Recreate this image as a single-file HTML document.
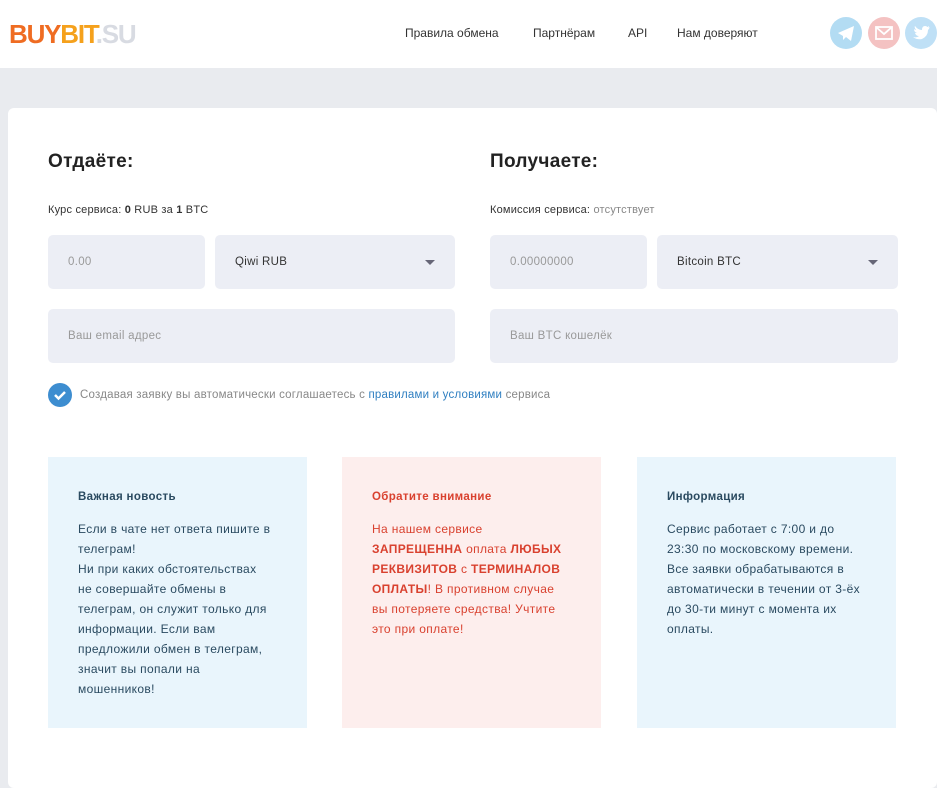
<!DOCTYPE html><html><head><meta charset="utf-8"><style>
*{box-sizing:border-box;margin:0;padding:0}
body{width:937px;height:773px;overflow:hidden;background:#e9ebef;font-family:"Liberation Sans",sans-serif;color:#333}
.hdr{height:68px;background:#fff;position:relative}
.logo{position:absolute;left:9px;top:19px;font-size:26px;font-weight:bold;letter-spacing:-1.2px}
.nav{position:absolute;top:26px;font-size:12px;color:#333}
.ic{position:absolute;top:17px;width:32px;height:32px;border-radius:50%}
.card{position:absolute;left:8px;top:108px;width:929px;height:680px;background:#fff;border-radius:6px}
.a{position:absolute}
h2{position:absolute;font-size:19px;font-weight:bold;color:#222;letter-spacing:0.3px}
.sm{position:absolute;font-size:11px;color:#333;letter-spacing:0.2px}
.inp{position:absolute;background:#eceef5;border-radius:5px;height:54px;font-size:11.5px;color:#999;padding:21px 20px;letter-spacing:0.3px}
.sel{color:#333}
.sel:after{content:"";position:absolute;right:20px;top:25px;border:5px solid transparent;border-top:5px solid #667;border-bottom:0}
.box{position:absolute;top:349px;width:259px;height:271px;padding:30px 34px 30px 30px;font-size:12px;line-height:20px;letter-spacing:0.35px}
.box b.t{display:block;font-size:11.5px;margin-bottom:12px}
</style></head><body>
<div class="hdr">
<div class="logo"><span style="color:#ef6c22">BUY</span><span style="color:#f5a11c">BIT</span><span style="color:#d8dbe2">.SU</span></div>
<div class="nav" style="left:405px">Правила обмена</div>
<div class="nav" style="left:533px">Партнёрам</div>
<div class="nav" style="left:628px">API</div>
<div class="nav" style="left:677px">Нам доверяют</div>
<div class="ic" style="left:830px;background:#b3dcf3"><svg width="32" height="32"><path d="M8 16 L24 9 L21 24 L16 20 L13 23 L13 19 Z" fill="#fff"/></svg></div>
<div class="ic" style="left:868px;background:#f4c2c2"><svg width="32" height="32"><rect x="8" y="10" width="16" height="12" fill="none" stroke="#fff" stroke-width="1.8"/><path d="M8 10 L16 17 L24 10" fill="none" stroke="#fff" stroke-width="1.8"/></svg></div>
<div class="ic" style="left:905px;background:#bfe0f6"><svg width="32" height="32"><path d="M8 20 Q12 21 14 19 Q11 19 10 16 Q11 16 12 16 Q9 15 9 12 Q10 13 11 13 Q9 10 10 9 Q13 13 17 13 Q17 9 20 9 Q22 9 22 10 Q23 10 24 9 Q24 11 23 11 Q24 11 25 10 Q24 12 23 13 Q23 19 17 22 Q12 23 8 20 Z" fill="#fff"/></svg></div>
</div>
<div class="card">
<h2 style="left:40px;top:43px">Отдаёте:</h2>
<h2 style="left:482px;top:43px">Получаете:</h2>
<div class="sm" style="left:40px;top:96px">Курс сервиса: <b>0</b> RUB за <b>1</b> BTC</div>
<div class="sm" style="left:482px;top:96px">Комиссия сервиса: <span style="color:#888">отсутствует</span></div>
<div class="inp" style="left:40px;top:127px;width:157px">0.00</div>
<div class="inp sel" style="left:207px;top:127px;width:240px">Qiwi RUB</div>
<div class="inp" style="left:482px;top:127px;width:157px">0.00000000</div>
<div class="inp sel" style="left:649px;top:127px;width:241px">Bitcoin BTC</div>
<div class="inp" style="left:40px;top:201px;width:407px">Ваш email адрес</div>
<div class="inp" style="left:482px;top:201px;width:408px">Ваш BTC кошелёк</div>
<svg class="a" style="left:40px;top:275px" width="24" height="24"><circle cx="12" cy="12" r="12" fill="#3d8dd0"/><path d="M7 12 L10.5 15.5 L17 9" fill="none" stroke="#fff" stroke-width="2.5"/></svg>
<div class="sm" style="left:72px;top:281px;color:#888;font-size:11.5px">Создавая заявку вы автоматически соглашаетесь с <span style="color:#2f7fc1">правилами и условиями</span> сервиса</div>
<div class="box" style="left:40px;background:#e9f5fc;color:#2a4a60"><b class="t">Важная новость</b>Если в чате нет ответа пишите в телеграм!<br>Ни при каких обстоятельствах не совершайте обмены в телеграм, он служит только для информации. Если вам предложили обмен в телеграм, значит вы попали на мошенников!</div>
<div class="box" style="left:334px;background:#fdeeed;color:#d9412f"><b class="t">Обратите внимание</b>На нашем сервисе <b>ЗАПРЕЩЕННА</b> оплата <b>ЛЮБЫХ РЕКВИЗИТОВ</b> с <b>ТЕРМИНАЛОВ ОПЛАТЫ</b>! В противном случае вы потеряете средства! Учтите это при оплате!</div>
<div class="box" style="left:629px;background:#e9f5fc;color:#2a4a60"><b class="t">Информация</b>Сервис работает с 7:00 и до 23:30 по московскому времени. Все заявки обрабатываются в автоматически в течении от 3-ёх до 30-ти минут с момента их оплаты.</div>
</div>
</body></html>
